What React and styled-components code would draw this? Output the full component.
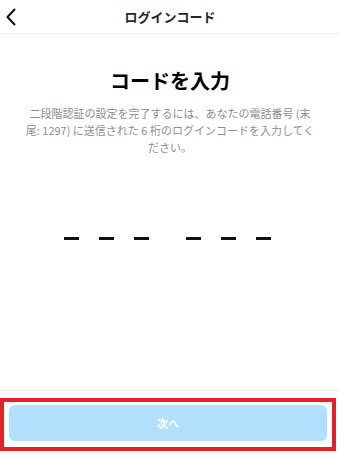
import React from 'react';
import styled, {createGlobalStyle} from 'styled-components';

const GlobalStyle = createGlobalStyle`
  html, body {
    margin: 0;
    padding: 0;
    background: #fff;
  }
  body {
    font-family: "Noto Sans CJK JP", "Noto Sans", sans-serif;
    color: #262626;
  }
`

const Page = styled.div`
  width: 340px;
  height: 455px;
  display: flex;
  flex-direction: column;
  overflow: hidden;
`

const Header = styled.header`
  height: 33px;
  flex-shrink: 0;
  display: grid;
  grid-template-columns: 40px 1fr 40px;
  align-items: center;
  border-bottom: 1px solid #ececec;
`

const BackButton = styled.button`
  border: 0;
  background: none;
  padding: 0 0 0 5px;
  height: 33px;
  display: flex;
  align-items: center;
  cursor: pointer;
`

const HeaderTitle = styled.h1`
  margin: 0;
  font-size: 13px;
  font-weight: 700;
  text-align: center;
  line-height: 1;
`

const Main = styled.main`
  flex: 1;
  display: flex;
  flex-direction: column;
  align-items: center;
  padding-top: 35px;
`

const Title = styled.h2`
  margin: 0;
  font-size: 20px;
  font-weight: 700;
  line-height: 24px;
  color: #000;
`

const Desc = styled.p`
  margin: 12px 0 0;
  padding: 0 24px;
  font-size: 11px;
  line-height: 17px;
  color: #8e8e8e;
  text-align: center;
`

const CodeRow = styled.div`
  margin-top: 81px;
  margin-right: 5px;
  display: flex;
  gap: 37px;
`

const CodeGroup = styled.div`
  display: flex;
  gap: 20px;
`

const Dash = styled.span`
  width: 15px;
  height: 2.5px;
  background: #111;
`

const Footer = styled.footer`
  flex-shrink: 0;
  border-top: 1px solid #ececec;
  padding: 7px 4px 4px 0;
`

const Highlight = styled.div`
  border: 4px solid #e5202a;
  padding: 3px 5px 6px;
`

const NextButton = styled.button`
  display: block;
  width: 100%;
  height: 36px;
  border: 0;
  border-radius: 6px;
  background: #b2dffc;
  color: #fff;
  font-family: "Noto Sans CJK JP", sans-serif;
  font-size: 11px;
  font-weight: 700;
`

const App = () => {
  return (
    <Page>
      <GlobalStyle />
      <Header>
        <BackButton aria-label="戻る">
          <svg width="12" height="18" viewBox="0 0 12 18">
            <path d="M9.5 1.5 L2.5 9 L9.5 16.5" fill="none" stroke="#111" strokeWidth="2" strokeLinecap="round" strokeLinejoin="round" />
          </svg>
        </BackButton>
        <HeaderTitle>ログインコード</HeaderTitle>
        <span />
      </Header>
      <Main>
        <Title>コードを入力</Title>
        <Desc>
          二段階認証の設定を完了するには、あなたの電話番号 (末尾: 1297) に送信された 6 桁のログインコードを入力してください。
        </Desc>
        <CodeRow>
          <CodeGroup>
            <Dash /><Dash /><Dash />
          </CodeGroup>
          <CodeGroup>
            <Dash /><Dash /><Dash />
          </CodeGroup>
        </CodeRow>
      </Main>
      <Footer>
        <Highlight>
          <NextButton>次へ</NextButton>
        </Highlight>
      </Footer>
    </Page>
  )
}

export default App;
